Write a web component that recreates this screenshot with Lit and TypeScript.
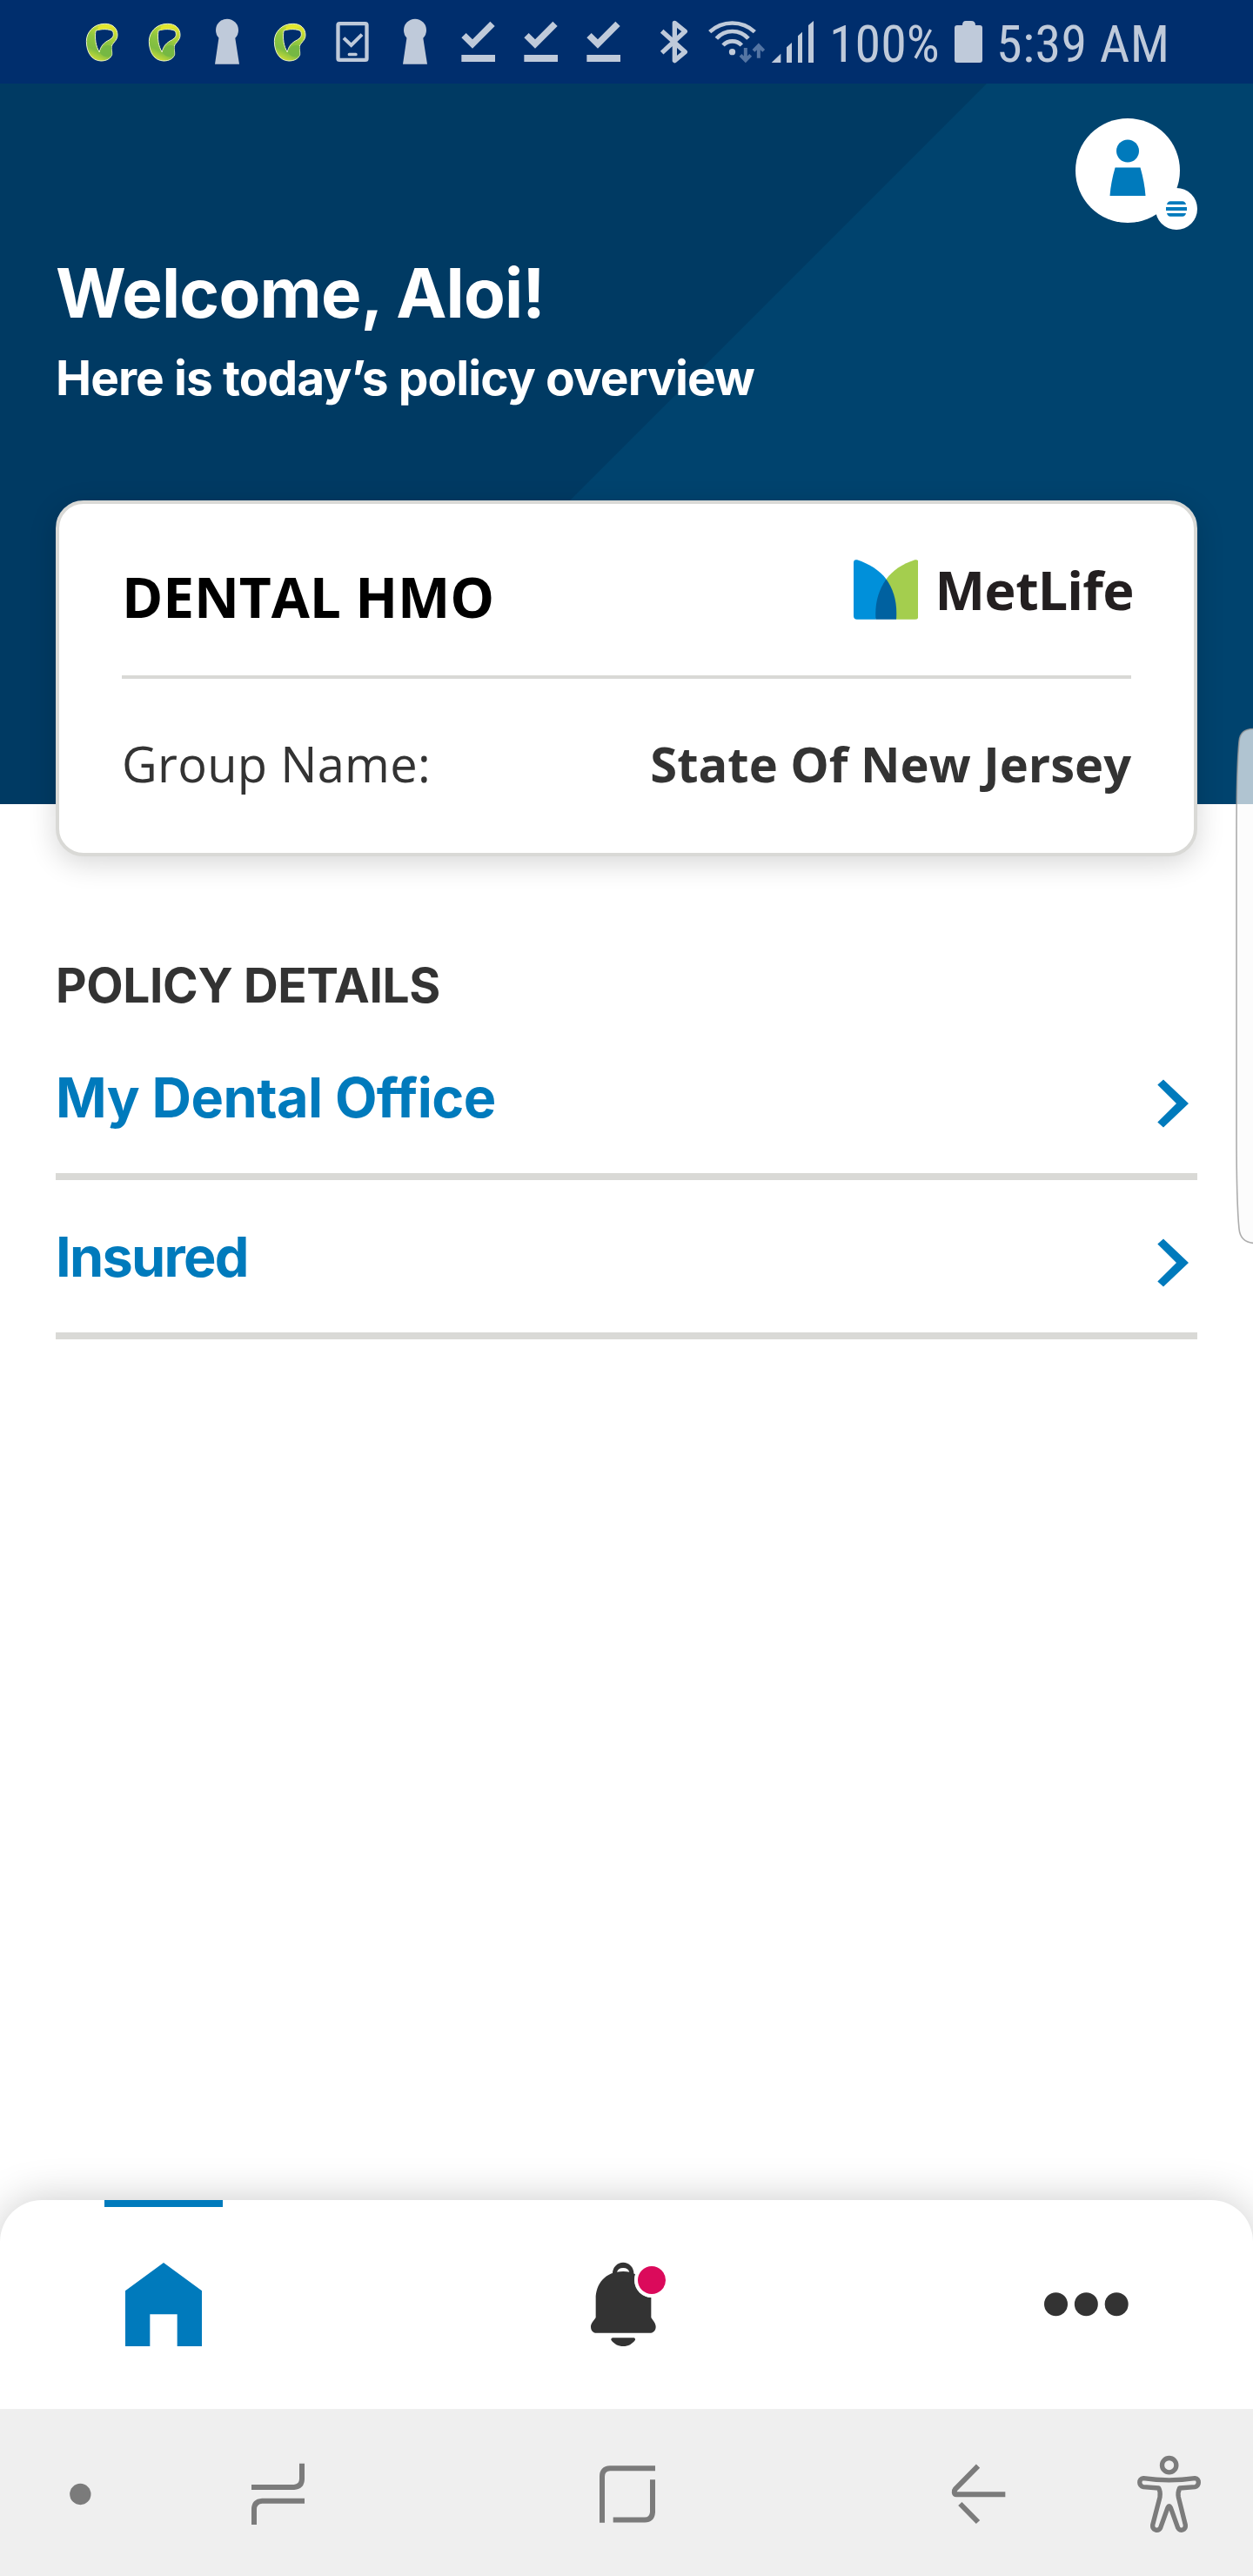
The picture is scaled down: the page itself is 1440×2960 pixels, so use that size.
import { LitElement, html, css, svg, TemplateResult } from "lit";
import { customElement, property } from "lit/decorators.js";
import { classMap } from "lit/directives/class-map.js";

const tile = (x: number, w: number, body: TemplateResult) =>
  html`<svg width=${w / 3} height="96" viewBox="${x} 0 ${w} 288">${body}</svg>`;

const leafBody = svg`
  <defs>
    <linearGradient id="leaf" x1="0.7" y1="0" x2="0.3" y2="1">
      <stop offset="0" stop-color="#e3e62f"></stop>
      <stop offset="0.45" stop-color="#8fc640"></stop>
      <stop offset="0.75" stop-color="#7fbd42"></stop>
      <stop offset="1" stop-color="#d3df37"></stop>
    </linearGradient>
  </defs>
  <path fill="url(#leaf)" fill-rule="evenodd" stroke="#eef6c8" stroke-width="3"
    d="M122 82C148 82 165 97 165 121C165 140 147 148 145 160C143 170 147 176 146 188C141 203 126 210 108 210C76 209 58 180 58 142C58 112 82 82 122 82ZM90 106C86 132 90 160 103 180C106 160 118 147 136 138C150 130 154 122 149 108C140 99 106 99 90 106Z"></path>
  <path fill="#76b843" d="M104 180C110 160 130 150 145 160C143 172 147 182 144 192C132 200 112 196 104 180Z"></path>
  <path fill="#e4e72e" d="M98 93C112 84 136 84 146 94C132 99 114 99 98 104Z"></path>`;

const keyholeBody = svg`<circle cx="543" cy="104" r="39"></circle><path d="M515 126H570L585 221H501Z"></path>`;
const phoneBody = svg`
  <rect x="925.5" y="81.500" width="99" height="125" rx="5" fill="none" stroke="currentColor" stroke-width="13"></rect>
  <path d="M945 131L971 156L1008 119" fill="none" stroke="currentColor" stroke-width="12"></path>
  <rect x="959" y="182" width="33" height="11" rx="5"></rect>`;
const checkBody = svg`<path d="M91 130L107 114L129 136L190 74L206 90L129 167Z"></path><path d="M91 189H207V213H91Z"></path>`;
const bluetoothBody = svg`<path d="M782 107L862 179L826 209V79L862 108L782 182" fill="none" stroke="currentColor" stroke-width="16" stroke-linejoin="round"></path>`;
const wifiBody = svg`
  <g fill="none" stroke="currentColor" stroke-width="14">
    <path d="M947 110A113.600 113.600 0 0 1 1102 110"></path>
    <path d="M970 133A73 73 0 0 1 1080 133"></path>
    <path d="M993 156A44 44 0 0 1 1057 156"></path>
  </g>
  <circle cx="1024.500" cy="179" r="11"></circle>
  <g class="traffic" fill="none" stroke-width="12">
    <path d="M1070.500 165V206M1053 190L1070.500 208L1088 190"></path>
    <path d="M1115.500 200V158M1098 175L1115.500 157L1133 175"></path>
  </g>`;
const signalBody = svg`<path d="M1160 216L1192 185V216ZM1212 216V163L1230 147V216ZM1251 216V124L1266 110V216ZM1287 216V87L1305 72V216Z"></path>`;
const batteryBody = svg`<path d="M9 5Q9 0 13 0H19Q24 0 24 5H29Q32 5 32 8V45Q32 48 29 48H3Q0 48 0 45V8Q0 5 3 5H8Z"></path>`;

@customElement("status-bar")
export class StatusBar extends LitElement {
  static styles = css`
    :host { display: block; background: #002e6d; color: #bfcada; }
    .bar { display: flex; align-items: flex-start; height: 96px; padding-left: 81px; }
    svg { display: block; flex: none; fill: currentColor; }
    .traffic { stroke: #5475a3; }
    .text { font: 400 60px/101px "Roboto Condensed", Roboto, sans-serif; white-space: nowrap; }
    .percent { margin-left: 12px; width: 144px; }
    .battery { margin-top: 24px; }
    .clock { margin-left: 16px; letter-spacing: 0.4px; }
  `;
  render() {
    return html`<div class="bar">
      ${tile(3, 216, leafBody)}${tile(3, 216, leafBody)}${tile(435, 216, keyholeBody)}${tile(3, 216, leafBody)}
      ${tile(867, 216, phoneBody)}${tile(435, 216, keyholeBody)}
      ${[0, 1, 2].map(() => tile(39, 216, checkBody))}
      ${tile(687, 216, bluetoothBody)}${tile(903, 240, wifiBody)}${tile(1143, 180, signalBody)}
      <span class="text percent">100%</span>
      <svg class="battery" width="32" height="48" viewBox="0 0 32 48">${batteryBody}</svg>
      <span class="text clock">5:39 AM</span>
    </div>`;
  }
}

@customElement("policy-card")
export class PolicyCard extends LitElement {
  static styles = css`
    :host { display: block; font-family: "Open Sans", "Noto Sans", sans-serif; }
    .card { box-sizing: border-box; height: 409px; padding: 0 72px; border: 4px solid #d9d9d6; border-radius: 32px; background: #fff; box-shadow: 0 8px 32px rgba(0, 0, 0, 0.16); }
    .head { box-sizing: border-box; display: flex; align-items: flex-start; justify-content: space-between; height: 201px; padding-top: 63px; border-bottom: 4px solid #d9d9d6; }
    .plan { margin: 0; font-size: 64px; line-height: 88px; font-weight: 700; letter-spacing: -0.15px; color: #000; white-space: nowrap; }
    .brand { display: flex; align-items: center; height: 69px; margin-top: 1px; }
    .mark { display: block; }
    .wordmark { margin: 0 -3px 0 19px; font: 700 61px/69px "Noto Sans", "Open Sans", sans-serif; letter-spacing: -0.6px; color: #231f20; }
    .row { display: flex; align-items: center; justify-content: space-between; height: 193px; font-size: 56px; line-height: 76px; color: #333; white-space: nowrap; }
    .name { letter-spacing: 0.3px; }
    .value { font-weight: 700; }
  `;
  render() {
    return html`<article class="card">
      <div class="head">
        <h2 class="plan">DENTAL HMO</h2>
        <div class="brand">
          <svg class="mark" width="74.500" height="69" viewBox="0 0 74.5 69">
            <path fill="#0090da" d="M0 3.500Q0 -.5 4 0.300C18 5 30 12.500 37.500 22.500L25.500 68.700H4Q0 68.700 0 65Z"></path>
            <path fill="#a4ce4e" d="M74.500 3.500Q74.500 -.5 70.500 0.300C56 5 45 12.500 37.500 22.500L49 68.700H70.500Q74.500 68.700 74.500 65Z"></path>
            <path fill="#0061a0" d="M37.500 22.500C46 34 50.500 50 49 68.700H25.500C24 50 29 34 37.500 22.500Z"></path>
          </svg>
          <span class="wordmark">MetLife</span>
        </div>
      </div>
      <div class="row"><span class="name">Group Name:</span><span class="value">State Of New Jersey</span></div>
    </article>`;
  }
}

@customElement("detail-row")
export class DetailRow extends LitElement {
  @property() label = "";
  @property({ type: Boolean }) tight = false;
  static styles = css`
    :host { display: block; }
    .row { box-sizing: border-box; display: flex; align-items: center; justify-content: space-between; height: 183px; padding-right: 10px; border-bottom: 8px solid #d9d9d6; color: #007abc; }
    .label { font: 700 63px/80px Inter, sans-serif; letter-spacing: -0.55px; white-space: nowrap; }
    .tight { letter-spacing: -1.7px; }
    .chevron { display: block; margin-top: 14px; fill: currentColor; }
  `;
  render() {
    return html`<div class="row">
      <span class=${classMap({ label: true, tight: this.tight })}>${this.label}</span>
      <svg class="chevron" width="36" height="56" viewBox="0 0 36 56"><path d="M7 0.500L36 28L7 55.500L0.300 49.500L22 28L0.300 6.500Z"></path></svg>
    </div>`;
  }
}

@customElement("tab-bar")
export class TabBar extends LitElement {
  static styles = css`
    :host { display: block; }
    .bar { display: flex; justify-content: space-between; height: 240px; padding: 0 124px 0 120px; border-radius: 48px 48px 0 0; background: #fff; color: #333; box-shadow: 0 0 48px rgba(0, 0, 0, 0.21); }
    .tab { display: flex; flex-direction: column; width: 136px; }
    svg { display: block; fill: currentColor; }
    .active { color: #007abc; }
  `;
  render() {
    return html`<nav class="bar">
      <div class="tab active"><svg width="136" height="240" viewBox="360 84 408 720">
        <path d="M360 84H768V108H360Z"></path>
        <path d="M564 300L696 397V588H611V478H517V588H432V397Z"></path>
      </svg></div>
      <div class="tab"><svg width="136" height="240" viewBox="210 84 408 720">
        <path d="M372 345V336A36.500 36.500 0 0 1 445 336V345H430V333A22 19 0 0 0 387 333V345Z"></path>
        <path d="M314 489V424C314 375 345 330 409 330C425 330 437 333 450 340C440 380 465 418 505 420V489C511 500 521 508 521 521C521 534 511 542.500 500 542.500H317C306 542.500 297 534 297 521C297 508 308 500 314 489Z"></path>
        <path d="M372 559H446Q451 560 450 566C440 580 426 588 409 588C391 588 377 580 367 566Q366 560 372 559Z"></path>
        <circle cx="507" cy="360" r="60" fill="#fff"></circle>
        <circle cx="507" cy="360" r="48" fill="#db0a5b"></circle>
      </svg></div>
      <div class="tab"><svg width="136" height="240" viewBox="420 84 408 720">
        <circle cx="520.500" cy="443" r="40.500"></circle><circle cx="625" cy="443" r="40.500"></circle><circle cx="729.500" cy="443" r="40.500"></circle>
      </svg></div>
    </nav>`;
  }
}

@customElement("system-nav")
export class SystemNav extends LitElement {
  static styles = css`
    :host { display: block; position: relative; background: #efefef; color: #7b7b7b; }
    .bar { display: flex; height: 192px; }
    svg { display: block; flex: none; fill: none; stroke: currentColor; stroke-width: 18; }
    .dot { fill: currentColor; stroke: none; }
    .home { margin-left: 124px; }
    .back { margin-left: 180px; }
  `;
  render() {
    return html`<nav class="bar">
      <svg width="184" height="192" viewBox="0 804 552 576"><circle class="dot" cx="277" cy="1098" r="36.500"></circle></svg>
      <svg width="272" height="192" viewBox="552 804 816 576"><path d="M867 1074H1014Q1041 1072 1041 1045V992M1050 1121H904Q876 1123 876 1150V1203"></path></svg>
      <svg class="home" width="280" height="192" viewBox="0 804 840 576"><path d="M519 1008.500H363Q336 1010 336 1037V1196M510 1048V1160Q508 1186 483 1186.500H374"></path></svg>
      <svg class="back" width="240" height="192" viewBox="0 804 720 576"><path d="M346 1099H178C169 1098 168 1087 174 1080L252 1001M190 1131L252 1194"></path></svg>
      <svg width="160" height="192" viewBox="720 804 480 576">
        <g stroke-width="16" stroke-linejoin="round">
          <circle cx="911" cy="998" r="24.500"></circle>
          <path d="M822 1043Q911 1056 1000 1043C1016 1044 1016 1070 1000 1073L947 1077Q940 1092 943 1108L967 1204C969 1222 948 1228 941 1214L916 1144Q911 1134 906 1144L881 1214C873 1228 852 1222 854 1204L879 1108Q882 1090 875 1077L822 1073C805 1070 805 1044 822 1043Z"></path>
        </g>
      </svg>
    </nav>`;
  }
}

@customElement("app-root")
export class AppRoot extends LitElement {
  static styles = css`
    :host { display: block; }
    .screen { position: relative; display: flex; flex-direction: column; width: 1440px; height: 2960px; overflow: hidden; background: #fff; font-family: Inter, sans-serif; }
    .hero { box-sizing: border-box; height: 828px; padding: 40px 64px 0; background: linear-gradient(135deg, #003a63 801.5px, #00436e 802.5px); color: #fff; }
    .account { position: relative; width: 120px; height: 120px; margin-left: auto; margin-right: 20px; }
    .account svg { display: block; overflow: visible; }
    .welcome { margin: 33px 0 0; font-size: 78px; line-height: 96px; font-weight: 700; letter-spacing: -0.78px; white-space: nowrap; }
    .summary { margin: 13px 0 0; font-size: 55px; line-height: 72px; font-weight: 700; letter-spacing: -0.93px; white-space: nowrap; }
    .policy { margin-top: 105px; }
    .details { padding: 172px 64px 0; }
    .title { margin: 0 0 5px; font-size: 55px; line-height: 72px; font-weight: 700; letter-spacing: -0.37px; color: #333; white-space: nowrap; }
    .tabs { margin-top: auto; }
    .edge { position: absolute; right: 0; top: 832px; }
  `;
  render() {
    return html`<div class="screen">
      <status-bar></status-bar>
      <header class="hero">
        <div class="account">
          <svg width="120" height="120" viewBox="0 0 120 120">
            <circle cx="60" cy="60" r="60" fill="#fff"></circle>
            <circle cx="116" cy="104" r="24" fill="#fff"></circle>
            <g fill="#007abc">
              <circle cx="60" cy="37.500" r="13"></circle>
              <path d="M45.600 56.500H74.500Q79.500 74 80.500 89H39.500Q40.500 74 45.600 56.500Z"></path>
              <path d="M105 99Q106 95.300 109 95.300H123Q126 95.300 127 99ZM104 102H128V106H104ZM105 109H127Q126 112.800 123 112.800H109Q106 112.800 105 109Z"></path>
            </g>
          </svg>
        </div>
        <h1 class="welcome">Welcome, Aloi!</h1>
        <p class="summary">Here is today’s policy overview</p>
        <policy-card class="policy"></policy-card>
      </header>
      <section class="details">
        <h2 class="title">POLICY DETAILS</h2>
        <detail-row label="My Dental Office"></detail-row>
        <detail-row label="Insured" tight></detail-row>
      </section>
      <tab-bar class="tabs"></tab-bar>
      <system-nav></system-nav>
      <svg class="edge" width="24" height="600" viewBox="0 0 24 600">
        <path d="M26 5.500C15 5.500 9 9 8 20C6 40 5 80 5 130V470C5 530 6 560 8 580C9 591 16 596 26 596.500" fill="#fbfbfb" fill-opacity="0.7" stroke="#999" stroke-opacity="0.8" stroke-width="1.600"></path>
      </svg>
    </div>`;
  }
}
